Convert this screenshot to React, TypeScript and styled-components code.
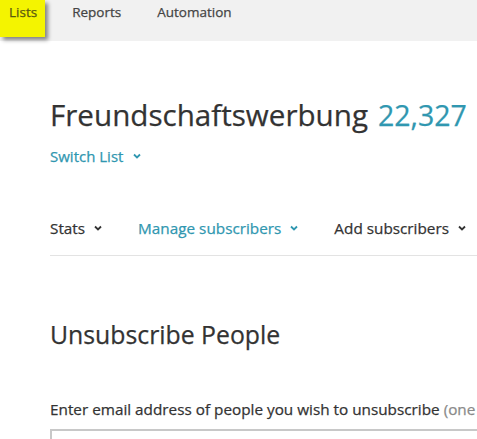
import { createGlobalStyle } from "styled-components";
import styled from "styled-components";

const GlobalStyle = createGlobalStyle`
  html, body {
    margin: 0;
    padding: 0;
    background: #fff;
    overflow: hidden;
  }
  body {
    font-family: "Open Sans", "Liberation Sans", sans-serif;
    color: #333;
    -webkit-text-stroke: 0.25px currentColor;
  }
`;

const TEAL = "#3097b0";

export default function App() {
  return (
    <>
      <GlobalStyle />
      <TopBar>
        <Tab $active>Lists</Tab>
        <Tab>Reports</Tab>
        <Tab>Automation</Tab>
      </TopBar>
      <Main>
        <TitleRow>
          <Title>Freundschaftswerbung</Title>
          <Count>22,327</Count>
        </TitleRow>
        <SwitchList>
          Switch List <Chevron />
        </SwitchList>
        <SubNav>
          <SubNavItem>
            Stats <Chevron />
          </SubNavItem>
          <SubNavItem $active>
            Manage subscribers <Chevron />
          </SubNavItem>
          <SubNavItem>
            Add subscribers <Chevron />
          </SubNavItem>
        </SubNav>
        <Heading>Unsubscribe People</Heading>
        <Label>
          Enter email address of people you wish to unsubscribe <Hint>(one per line)</Hint>
        </Label>
        <TextArea />
      </Main>
    </>
  );
}

function Chevron() {
  return (
    <ChevronSvg viewBox="0 0 10 10">
      <path d="M2 3.5 L5 6.5 L8 3.5" fill="none" stroke="currentColor" strokeWidth="1.8" />
    </ChevronSvg>
  );
}

const TopBar = styled.nav`
  display: flex;
  align-items: flex-start;
  height: 41px;
  background: #f1f1f1;
  white-space: nowrap;
`;

const Tab = styled.a<{ $active?: boolean }>`
  display: block;
  font-size: 13.5px;
  line-height: 24px;
  height: 37px;
  box-sizing: border-box;
  padding: ${(p) => (p.$active ? "0 8px 0 9px" : "0")};
  margin-right: ${(p) => (p.$active ? "27px" : "36px")};
  color: ${(p) => (p.$active ? "#5a5a10" : "#444")};
  background: ${(p) => (p.$active ? "#f4f400" : "transparent")};
  box-shadow: ${(p) => (p.$active ? "3px 3px 4px rgba(0,0,0,0.45)" : "none")};
  cursor: pointer;
`;

const Main = styled.main`
  padding: 0 0 0 50px;
`;

const TitleRow = styled.div`
  display: flex;
  align-items: baseline;
  gap: 10px;
  margin-top: 54px;
  white-space: nowrap;
`;

const Title = styled.h1`
  margin: 0;
  font-size: 29.6px;
  font-weight: 400;
  color: #333;
  line-height: 40px;
`;

const Count = styled.span`
  font-size: 28.5px;
  color: ${TEAL};
  line-height: 40px;
`;

const SwitchList = styled.a`
  display: inline-flex;
  align-items: center;
  gap: 9px;
  margin-top: 11px;
  font-size: 15px;
  color: ${TEAL};
  cursor: pointer;
`;

const ChevronSvg = styled.svg`
  width: 10px;
  height: 10px;
  -webkit-text-stroke: 0;
`;

const SubNav = styled.div`
  display: flex;
  gap: 35px;
  margin-top: 47px;
  height: 41px;
  border-bottom: 1px solid #e3e3e3;
  white-space: nowrap;
`;

const SubNavItem = styled.a<{ $active?: boolean }>`
  display: inline-flex;
  align-items: center;
  gap: 8px;
  height: 28px;
  font-size: 15.3px;
  color: ${(p) => (p.$active ? TEAL : "#333")};
  cursor: pointer;
`;

const Heading = styled.h2`
  margin: 62px 0 0;
  font-size: 24.8px;
  font-weight: 400;
  line-height: 32px;
  color: #333;
`;

const Label = styled.label`
  display: block;
  margin-top: 49px;
  font-size: 15.3px;
  white-space: nowrap;
  color: #333;
`;

const Hint = styled.span`
  color: #8a8a8a;
`;

const TextArea = styled.div`
  margin-top: 10px;
  height: 80px;
  border: 2px solid #c8c8c8;
  border-right: none;
`;
